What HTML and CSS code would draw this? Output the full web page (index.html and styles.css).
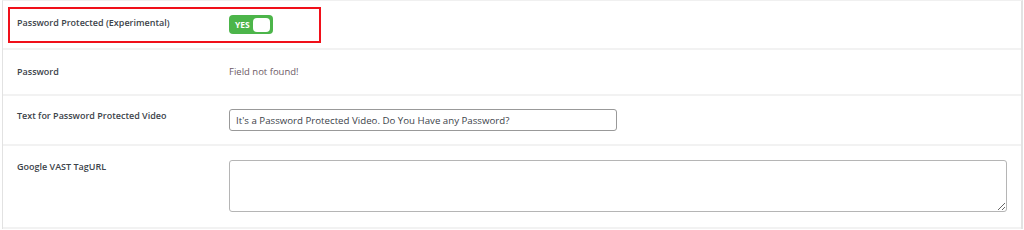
FILE: index.html
```html
<!DOCTYPE html>
<html lang="en">
<head>
  <meta charset="UTF-8" />
  <meta name="viewport" content="width=device-width, initial-scale=1.0"/>
  <title>Video Settings</title>
  <link rel="stylesheet" href="styles.css">
</head>
<body>
  <div class="settings">
    <div class="row first">
      <div class="label">Password Protected (Experimental)</div>
      <div class="field">
        <label class="toggle">
          <span class="toggle-text">YES</span>
          <span class="knob"></span>
        </label>
      </div>
      <div class="highlight"></div>
    </div>

    <div class="row">
      <div class="label">Password</div>
      <div class="field">
        <span class="notice">Field not found!</span>
      </div>
    </div>

    <div class="row">
      <div class="label">Text for Password Protected Video</div>
      <div class="field">
        <input type="text" class="text-input" value="It's a Password Protected Video. Do You Have any Password?" />
      </div>
    </div>

    <div class="row last">
      <div class="label">Google VAST TagURL</div>
      <div class="field">
        <textarea class="text-area"></textarea>
      </div>
    </div>
  </div>
</body>
</html>
```

FILE: styles.css
```css
body {
  margin: 0;
  background: #fff;
  font-family: 'Open Sans', sans-serif;
  color: #3c434a;
}
.settings {
  margin-left: 2px;
  width: 1018px;
  border-left: 1px solid #e2e2e2;
  border-right: 2px solid #e2e2e2;
  border-top: 1px solid #f0f0f0;
}
.row {
  position: relative;
  display: flex;
  padding: 15px 0;
  border-bottom: 2px solid #f2f2f2;
}
.row.first {
  padding: 14px 0 14px;
}
.row.first .label {
  padding-top: 1px;
}
.label {
  width: 212px;
  padding-left: 14px;
  font-size: 9px;
  font-weight: 600;
  line-height: 14px;
  color: #3c434a;
}
.field {
  flex: 1;
  font-size: 9.5px;
  line-height: 14px;
}
.notice {
  color: #6d5a66;
}
.toggle {
  display: flex;
  align-items: center;
  justify-content: space-between;
  width: 44px;
  height: 19px;
  box-sizing: border-box;
  padding: 0 3px 0 6px;
  background: #4cb54a;
  border-radius: 4px;
}
.toggle-text {
  color: #fff;
  font-size: 8.5px;
  font-weight: 700;
}
.knob {
  width: 17px;
  height: 14px;
  background: #fff;
  border-radius: 4px;
}
.highlight {
  position: absolute;
  left: 5px;
  top: 6px;
  width: 309px;
  height: 32px;
  border: 2px solid #f0101a;
}
.row:nth-child(3) {
  padding: 13px 0 13px;
}
.row:nth-child(3) .label {
  padding-top: 0;
}
.text-input {
  display: block;
  width: 388px;
  height: 22px;
  box-sizing: border-box;
  margin: 0;
  padding: 0 6px;
  border: 1px solid #999;
  border-radius: 3px;
  font-family: 'Open Sans', sans-serif;
  font-size: 9.7px;
  color: #3c434a;
  outline: none;
}
.row.last {
  padding: 14px 0 15px;
}
.text-area {
  display: block;
  width: 778px;
  height: 52px;
  box-sizing: border-box;
  margin: 0;
  border: 1px solid #b5b5b5;
  border-radius: 3px;
  outline: none;
}
```
